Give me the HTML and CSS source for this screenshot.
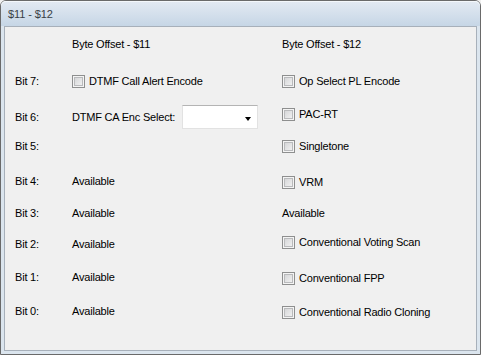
FILE: index.html
```html
<!DOCTYPE html>
<html>
<head>
<meta charset="utf-8">
<link rel="stylesheet" href="styles.css">
</head>
<body>
<div class="window">
  <div class="titlebar"><span class="title">$11 - $12</span></div>
  <div class="content">
    <div class="row r-head">
      <span class="label"></span>
      <span class="cell">Byte Offset - $11</span>
      <span class="cell">Byte Offset - $12</span>
    </div>
    <div class="row r7">
      <span class="label">Bit 7:</span>
      <span class="cell"><span class="cb"></span>DTMF Call Alert Encode</span>
      <span class="cell"><span class="cb"></span>Op Select PL Encode</span>
    </div>
    <div class="row r6">
      <span class="label">Bit 6:</span>
      <span class="cell">DTMF CA Enc Select:<span class="combo"><span class="arrow"></span></span></span>
      <span class="cell up3"><span class="cb"></span>PAC-RT</span>
    </div>
    <div class="row r5">
      <span class="label">Bit 5:</span>
      <span class="cell"></span>
      <span class="cell"><span class="cb"></span>Singletone</span>
    </div>
    <div class="row r4">
      <span class="label">Bit 4:</span>
      <span class="cell">Available</span>
      <span class="cell down1"><span class="cb"></span>VRM</span>
    </div>
    <div class="row r3">
      <span class="label">Bit 3:</span>
      <span class="cell">Available</span>
      <span class="cell">Available</span>
    </div>
    <div class="row r2">
      <span class="label">Bit 2:</span>
      <span class="cell">Available</span>
      <span class="cell up2"><span class="cb"></span>Conventional Voting Scan</span>
    </div>
    <div class="row r1">
      <span class="label">Bit 1:</span>
      <span class="cell">Available</span>
      <span class="cell down1"><span class="cb"></span>Conventional FPP</span>
    </div>
    <div class="row r0">
      <span class="label">Bit 0:</span>
      <span class="cell">Available</span>
      <span class="cell down1"><span class="cb"></span>Conventional Radio Cloning</span>
    </div>
  </div>
</div>
</body>
</html>
```

FILE: styles.css
```css
html, body {
  margin: 0;
  padding: 0;
  background: #f0f0f0;
}
body {
  width: 481px;
  height: 355px;
  overflow: hidden;
  font-family: "Liberation Sans", Arial, sans-serif;
  font-size: 11px;
  color: #000;
}
.window {
  box-sizing: border-box;
  width: 481px;
  height: 355px;
  border: 1px solid #6a6a6a;
  border-radius: 6px 6px 0 0;
  background: #dbe5ee;
  padding: 0 3px 3px 3px;
  display: flex;
  flex-direction: column;
}
.titlebar {
  height: 25px;
  flex: none;
  margin: 0 -3px;
  padding: 0 7px;
  border-radius: 5px 5px 0 0;
  background: linear-gradient(#e3eaf2, #c6d6e6);
  box-shadow: inset 0 1px 0 #f4f8fb;
  display: flex;
  align-items: center;
}
.title {
  color: #3a3f46;
  font-size: 11px;
  letter-spacing: -0.1px;
}
.content {
  flex: 1;
  border: 1px solid #a7b0ba;
  background: #f0f0f0;
  padding: 7px 0 0 10px;
}
.row {
  height: 20px;
  display: grid;
  grid-template-columns: 57px 210px 1fr;
  align-items: center;
  letter-spacing: -0.2px;
}
.cell, .label {
  display: flex;
  align-items: center;
  white-space: nowrap;
}
.r7 { margin-top: 17px; }
.r6 { margin-top: 14px; }
.r5 { margin-top: 11px; }
.r4 { margin-top: 15px; }
.r3 { margin-top: 12px; }
.r2 { margin-top: 11px; }
.r1 { margin-top: 13px; }
.r0 { margin-top: 14px; }
.up3 { position: relative; top: -3px; }
.up2 { position: relative; top: -2px; }
.down1 { position: relative; top: 1px; }
.cb {
  box-sizing: border-box;
  width: 13px;
  height: 13px;
  margin-right: 4px;
  border: 1px solid #8e8f8f;
  background: linear-gradient(135deg, #cfd0d2, #f7f7f7);
  box-shadow: inset 0 0 0 1px #f4f4f4, inset 0 0 0 2px #b9babc;
  flex: none;
}
.combo {
  box-sizing: border-box;
  position: relative;
  width: 76px;
  height: 24px;
  margin-left: 7px;
  background: #fff;
  border: 1px solid #e2e2e2;
  border-top-color: #b4b4b4;
  flex: none;
}
.arrow {
  position: absolute;
  right: 6px;
  top: 11px;
  width: 0;
  height: 0;
  border-left: 3.5px solid transparent;
  border-right: 3.5px solid transparent;
  border-top: 4px solid #000;
}
```
